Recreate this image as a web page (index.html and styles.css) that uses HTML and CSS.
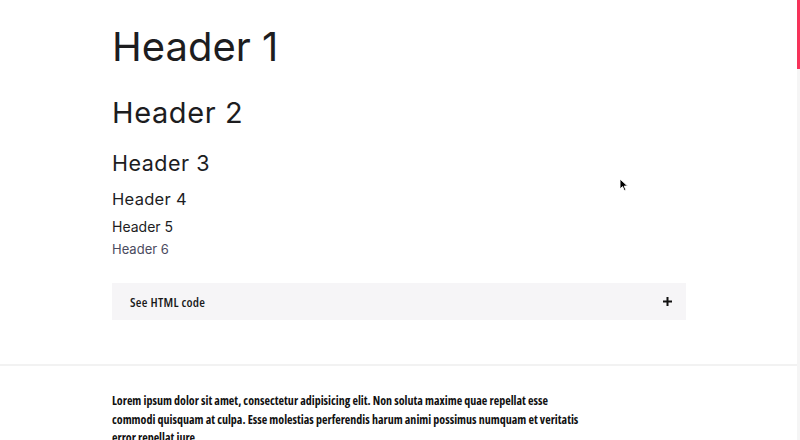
FILE: index.html
```html
<!DOCTYPE html>
<html lang="en">
<head>
<meta charset="utf-8">
<title>Typography</title>
<link rel="stylesheet" href="styles.css">
</head>
<body>
<main class="page">
  <section class="headers">
    <h1 class="h h1">Header 1</h1>
    <h2 class="h h2">Header 2</h2>
    <h3 class="h h3">Header 3</h3>
    <h4 class="h h4">Header 4</h4>
    <h5 class="h h5">Header 5</h5>
    <h6 class="h h6">Header 6</h6>
    <div class="code-toggle">
      <span class="code-label">See HTML code</span>
      <svg class="plus" width="9" height="9" viewBox="0 0 9 9" aria-hidden="true">
        <rect x="3.5" y="0" width="2" height="9" fill="#111"/>
        <rect x="0" y="3.5" width="9" height="2" fill="#111"/>
      </svg>
    </div>
  </section>
  <hr class="divider">
  <section class="body-copy">
    <p class="para">Lorem ipsum dolor sit amet, consectetur adipisicing elit. Non soluta maxime quae repellat esse commodi quisquam at culpa. Esse molestias perferendis harum animi possimus numquam et veritatis error repellat iure.</p>
  </section>
</main>
<div class="scrollbar"><div class="thumb"></div></div>
<svg class="cursor" width="10" height="14" viewBox="0 0 10 14" aria-hidden="true">
  <path d="M1 1 L1 11 L3.5 8.6 L5.3 12.6 L6.9 11.9 L5.2 8.1 L8.6 8.1 Z" fill="#000" stroke="#fff" stroke-width="0.9"/>
</svg>
</body>
</html>
```
FILE: styles.css
```css
html, body {
  margin: 0;
  padding: 0;
  background: #ffffff;
  overflow: hidden;
}
body {
  font-family: "Open Sans", "Lato", sans-serif;
  color: #1c1c1c;
}
.page {
  width: 797px;
}
.headers {
  padding: 23px 0 0 112px;
  width: 574px;
  display: flex;
  flex-direction: column;
  align-items: flex-start;
}
.h {
  margin: 0;
  font-family: "Inter", "Noto Sans", sans-serif;
  font-weight: 400;
  color: #1d1d1f;
}
.h1 { font-size: 40px; line-height: 48px; }
.h2 { font-size: 29px; line-height: 36px; margin-top: 24px; letter-spacing: 0.6px; }
.h3 { font-size: 21.5px; line-height: 28px; margin-top: 18px; letter-spacing: 0.5px; }
.h4 { font-size: 16.5px; line-height: 22px; margin-top: 11px; letter-spacing: 0.3px; }
.h5 { font-size: 14px; line-height: 20px; margin-top: 7px; }
.h6 { font-size: 13px; line-height: 18px; margin-top: 3px; color: #4b4b60; }

.code-toggle {
  margin-top: 25px;
  align-self: stretch;
  height: 37px;
  background: #f6f5f7;
  display: flex;
  align-items: center;
  justify-content: space-between;
  padding: 0 14px 0 18px;
}
.code-label {
  font-family: "Open Sans", "Lato", sans-serif;
  font-stretch: 75%;
  font-size: 13px;
  letter-spacing: 0.3px;
  font-weight: 600;
  color: #1a1a1a;
}
.plus { display: block; }

.divider {
  margin: 44px 0 0 0;
  border: 0;
  height: 2px;
  background: #f2f2f2;
}
.body-copy {
  padding: 26px 0 0 112px;
}
.para {
  margin: 0;
  max-width: 476px;
  font-family: "Open Sans", "Lato", sans-serif;
  font-stretch: 80%;
  font-size: 12px;
  line-height: 18.5px;
  font-weight: 700;
  color: #111;
}

.scrollbar {
  position: fixed;
  top: 0;
  right: 0;
  width: 3px;
  height: 100%;
  background: #f5f5f5;
}
.thumb {
  height: 69px;
  background: #f7335a;
}
.cursor {
  position: absolute;
  left: 619px;
  top: 178px;
}
```
